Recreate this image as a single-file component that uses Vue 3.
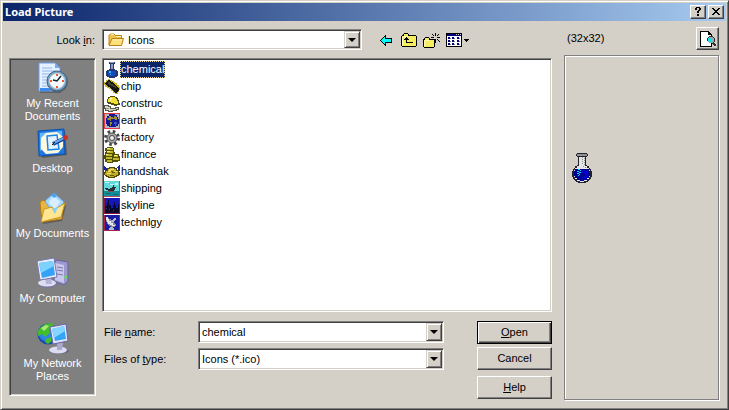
<template>
  <main class="dialog">
    <header class="titlebar">
      <h1>Load Picture</h1>
      <div class="titlebar_btns">
        <button type="button" class="caption" aria-label="Help">
          <svg width="8" height="9" viewBox="0 0 8 9" shape-rendering="crispEdges"><path d="M1 1h1V0h4v1h1v2H6v1H5v2H3V4h1V3h1V1H3v2H1zM3 7h2v2H3z" /></svg>
        </button>
        <button type="button" class="caption" aria-label="Close">
          <svg width="8" height="7" viewBox="0 0 8 7" shape-rendering="crispEdges"><path d="M0 0h2v1h1v1h2V1h1V0h2v1H7v1H6v1H5v1h1v1h1v1h1v1H6V6H5V5H3v1H2v1H0V6h1V5h1V4h1V3H2V2H1V1H0z" /></svg>
        </button>
      </div>
    </header>

    <form class="body" @submit.prevent>
      <div class="picker">
        <label class="look_label" for="look-in">Look <u>i</u>n:</label>
        <div class="look_row">
          <div class="combo look_combo">
            <svg class="look_icon" width="16" height="14" viewBox="0 0 16 14">
              <path d="M1 12V2.500L2.500 1H6l1.500 1.500H13.500V6" fill="#f0c44c" stroke="#b98212" />
              <path d="M1 12.500L4 5.500H15.500L13.500 12.500Z" fill="#ffdf7a" stroke="#b98212" />
              <path d="M5 7H14" stroke="#fff3b8" />
              <path d="M3 1.500H6M8 3.500H13" stroke="#fff0ae" />
            </svg>
            <select id="look-in" v-model="folder">
              <option>Icons</option>
            </select>
            <span class="drop"><i></i></span>
          </div>
          <div class="toolbar">
            <button type="button" aria-label="Back">
              <svg width="12" height="11" viewBox="0 0 12 11" shape-rendering="crispEdges">
                <path d="M5 0h1v3h6v5H6v3H5v-1H4V9H3V8H2V7H1V6H0V5h1V4h1V3h1V2h1V1h1z" />
                <path d="M5 2v2h6v3H5v2H4V8H3V7H2V6H1V5h1V4h1V3h1V2z" fill="#00ffff" />
              </svg>
            </button>
            <button type="button" aria-label="Up one level">
              <svg width="16" height="14" viewBox="0 0 16 14" shape-rendering="crispEdges">
                <path d="M1 2h1V1h1V0h4v1h1v1h7v1h1v10h-1v1H1v-1H0V3h1z" />
                <path d="M3 1h4v2h8v10H1V3h2z" fill="#f5ee5e" />
                <path d="M2 3h5v1H2zM1 4h1v8H1z" fill="#fffbc0" />
                <path d="M5 4h1v1h1v1h1v1H6v2h6v1H5V7H3V6h1V5h1z" />
              </svg>
            </button>
            <button type="button" aria-label="Create new folder">
              <svg width="17" height="15" viewBox="0 0 17 15" shape-rendering="crispEdges">
                <path d="M0 6h1V5h1V4h4v1h1v1h5v8h-1v1H1v-1H0z" />
                <path d="M2 5h4v2h5v7H1V7h1z" fill="#f5ee5e" />
                <path d="M2 7h4v1H2zM1 8h1v5H1z" fill="#fffbc0" />
                <path d="M12 0h1v3h-1zM12 6h1v4h-1zM8 4h3v1H8zM14 4h3v1h-3zM9 1h1v1H9zM10 2h1v1h-1zM15 1h1v1h-1zM14 2h1v1h-1zM14 6h1v1h-1zM15 7h1v1h-1zM16 8h1v1h-1z" />
              </svg>
            </button>
            <button type="button" class="views" aria-label="View menu">
              <svg width="24" height="14" viewBox="0 0 24 14" shape-rendering="crispEdges">
                <path d="M0 0h16v14H0z" />
                <path d="M1 3h14v10H1z" fill="#fff" />
                <path d="M1 1h14v2H1z" fill="#000080" />
                <path d="M10 1h1v1h-1zM12 1h1v1h-1zM14 1h1v1h-1z" fill="#d4d0c8" />
                <path d="M2 4h2v2H2zM6 4h2v2H6zM11 4h2v2h-2zM2 7h2v2H2zM6 7h2v2H6zM11 7h2v2h-2zM2 10h2v2H2zM6 10h2v2H6zM11 10h2v2h-2z" fill="#000080" />
                <path d="M4 5h1v1H4zM8 5h1v1H8zM13 5h1v1h-1zM4 8h1v1H4zM8 8h1v1H8zM13 8h1v1h-1zM4 11h1v1H4zM8 11h1v1H8zM13 11h1v1h-1z" fill="#808080" />
                <path d="M18 6h5v1h-1v1h-1v1h-1V8h-1V7h-1z" />
              </svg>
            </button>
          </div>
        </div>

        <nav class="places sunken" aria-label="Places">
          <button v-for="place in places" :key="place" type="button" class="place">
            <svg v-if="place === 'My Recent Documents'" width="32" height="32" viewBox="0 0 32 32">
              <path d="M3 3H20L24 7V31H3Z" fill="#333" opacity=".4" />
              <path d="M2 1H18L23 6V29H2Z" fill="#e4efff" stroke="#6f9fe8" />
              <path d="M18 1V6H23Z" fill="#78aaf2" />
              <path d="M5 6H15M5 9H19M5 12H14M5 15H11M5 18H10M5 21H10M5 24H11" stroke="#8fb7ef" />
              <path d="M3 26H12L14 29H3Z" fill="#3a8bee" />
              <circle cx="20.500" cy="20" r="10.500" fill="#55616f" />
              <circle cx="20" cy="19" r="10" fill="#7ea2bd" stroke="#3c6688" />
              <circle cx="20" cy="19" r="7.500" fill="#f3fbff" stroke="#c5d9e6" />
              <path d="M20 12V14M20 24V26M13 19H15M25 19H27" stroke="#ee5a2c" stroke-width="2" />
              <path d="M24 14L20 19L16 18" fill="none" stroke="#16232f" stroke-width="1.500" />
            </svg>
            <svg v-else-if="place === 'Desktop'" width="32" height="32" viewBox="0 0 32 32">
              <path d="M3 7L28 4L30 28L5 31Z" fill="#333" opacity=".5" />
              <path d="M1 4L27 2L28 27L2 29Z" fill="#1d78df" stroke="#0c50b0" />
              <path d="M3 6L25 4V10L3 24Z" fill="#62b6ff" />
              <path d="M9 6L20 5L26 10V20L21 26L9 27L4 22V11Z" fill="#fff8dc" />
              <path d="M10 9L20 8L22 22L11 23Z" fill="#e2f2ff" stroke="#1784e8" stroke-width="1.500" />
              <path d="M16 17L28 11" stroke="#183f8a" stroke-width="4" />
              <path d="M17 16L27 11" stroke="#62a9f2" stroke-width="2" />
              <path d="M15 18L18 15" stroke="#222" />
              <circle cx="28.500" cy="10.500" r="2.500" fill="#cf2f20" />
            </svg>
            <svg v-else-if="place === 'My Documents'" width="32" height="32" viewBox="0 0 32 32">
              <path d="M5 12L24 10L29 14L25 29L6 32Z" fill="#333" opacity=".45" />
              <path d="M3 11L5 8L11 10L12 13L25 8V27L5 30Z" fill="#e7b63f" stroke="#b57b14" />
              <path d="M8 9L17 1L27 10L18 24Z" fill="#a9d9ff" stroke="#64a6e4" />
              <path d="M14 7L17 4L23 10L18 17L12 11Z" fill="#d9efff" />
              <path d="M14 3L17 1L20 4L17 6Z" fill="#49a3eb" />
              <path d="M4 30L7 17L15 15L17 18L28 11L24 25Z" fill="#ffe68f" stroke="#cc951f" />
              <path d="M15 17L21 15L18 22Z" fill="#8ccdf9" />
            </svg>
            <svg v-else-if="place === 'My Computer'" width="32" height="32" viewBox="0 0 32 32">
              <path d="M17 6L20 3L31 5V24L27 28L17 24Z" fill="#9a98cc" stroke="#6664a0" />
              <path d="M18 6L27 8V26L18 23Z" fill="#c9c8ea" />
              <path d="M20 10L26 11M20 13L26 14M20 17L26 18" stroke="#7776aa" />
              <circle cx="29" cy="20" r="1.500" fill="#5ae642" />
              <ellipse cx="11" cy="27" rx="10" ry="4" fill="#77769b" />
              <ellipse cx="10" cy="26" rx="9" ry="3.500" fill="#dedef2" />
              <path d="M8 20L14 21L15 27H9Z" fill="#b4b3d9" />
              <path d="M0 4L17 1L20 20L3 23Z" fill="#ececfa" stroke="#7776b2" />
              <path d="M2 6L16 4L18 18L5 21Z" fill="#34a3f5" />
              <path d="M2 6L16 4L17 9L4 16Z" fill="#7ed2ff" />
            </svg>
            <svg v-else width="32" height="32" viewBox="0 0 32 32">
              <circle cx="11" cy="12" r="10.500" fill="#164da8" />
              <circle cx="10" cy="11" r="8.500" fill="#2e83e5" />
              <path d="M3 6L8 2L15 1L18 5L12 8L13 11L8 15L5 12L1 14V9ZM9 17L14 15L15 19L11 22L8 20Z" fill="#43bd2e" />
              <path d="M4 6L9 3L12 4L7 9Z" fill="#a7ee73" />
              <ellipse cx="22" cy="29" rx="10" ry="3" fill="#66658b" />
              <ellipse cx="21" cy="28" rx="9" ry="3.500" fill="#dddcf1" />
              <path d="M20 20L26 21L25 28H20Z" fill="#aaa9d0" />
              <path d="M13 5L29 2L31 19L16 22Z" fill="#e5e5fa" stroke="#6665a5" />
              <path d="M15 7L27 4L29 17L18 19Z" fill="#34a5f5" />
              <path d="M15 7L27 4L28 9L17 16Z" fill="#84d5ff" />
            </svg>
            <span>{{ place }}</span>
          </button>
        </nav>

        <ul class="files sunken" role="listbox" aria-label="Files">
          <li v-for="file in files" :key="file" role="option" :aria-selected="file === selected" @click="selected = file">
            <svg width="16" height="16" viewBox="0 0 16 16" shape-rendering="crispEdges">
              <g v-if="file === 'chemical'">
                <path d="M5 0h6v2h-1v5h1v1h2v1h1v5h-1v1h-2v1H5v-1H3v-1H2V9h1V8h2V7h1V2H5z" fill="#26366e" />
                <path d="M6 0h4v1H6zM7 2h2v5H7z" fill="#8f9cc0" />
                <path d="M4 9h8v4h-1v1H5v-1H4z" fill="#0e4bbf" />
                <path d="M5 9h2v2H5zM6 12h1v1H6z" fill="#43b4f4" />
              </g>
              <g v-else-if="file === 'chip'">
                <path d="M0 3h2V1h2V0h2v1h2v1h2v1h1v1h2v2h2v2h1v3h-1v2h-1v2h-3v-1H9v-2H7v-2H5v-1H3V8H1V6H0z" fill="#c5b51f" />
                <path d="M1 4h1V3h1V2h1V1h2v1h1v1h2v1h1v1h1v1h1v1h1v1h1v1h1v3h-1v1h-1v1h-2v-1h-1v-1h-1v-1H8v-1H7V9H6V8H4V7H3V6H2V5H1z" fill="#171711" />
                <path d="M4 3h2v1h1v1h2v1h1v1h2v2h-1V8H9V7H7V6H5V5H4z" fill="#45442e" />
              </g>
              <g v-else-if="file === 'construc'">
                <path d="M3 3h1V1h2V0h5v1h2v1h1v2h1v3h1v2h-3v1h-3V9H7V8H4V7H3z" fill="#4f4912" />
                <path d="M4 3h1V2h1V1h5v1h1v1h1v2h1v3h-4V7H7V6H4z" fill="#f1e137" />
                <path d="M6 2h2v1H7v2H6z" fill="#fffac0" />
                <path d="M0 9h5v1h2v2h4v-1h4v3h-2v1H9v1H4v-1H1v-2H0z" fill="#585850" />
                <path d="M1 10h3v1h2v2h6v-1h2v1h-2v1H9v1H5v-1H2v-2H1z" fill="#d7d6c8" />
                <path d="M2 12h3v1H2zM7 14h2v1H7z" fill="#a29e63" />
              </g>
              <g v-else-if="file === 'earth'">
                <path d="M0 0h16v16H0z" fill="#e43b46" />
                <path d="M1 1h14v14H1z" fill="#b6b4c8" />
                <path d="M5 1h6v1h2v2h1v2h1v5h-1v2h-2v1H5v-1H3v-2H2V5h1V3h2z" fill="#101a92" />
                <path d="M5 3h2v1h2v2H7v2H6V7H4V5h1zM10 3h2v1h1v3h-2V6H9V5h1zM6 9h2v2H7v2H6z" fill="#a08b33" />
                <path d="M3 5h1v2H3zM10 9h3v2h-1v2h-1v-2h-1z" fill="#4053cf" />
              </g>
              <g v-else-if="file === 'factory'" shape-rendering="auto">
                <circle cx="8" cy="8" r="6.500" fill="none" stroke="#444" stroke-width="3" stroke-dasharray="2.550 2.550" />
                <circle cx="8" cy="8" r="5" fill="#a9a9a9" stroke="#555" />
                <circle cx="8" cy="8" r="2.500" fill="#eee" stroke="#444" />
              </g>
              <g v-else-if="file === 'finance'">
                <path d="M1 1h2V0h6v1h1v4h1v2h4v2h1v5h-2v1H9v1H3v-1H1v-3H0V8h1V5h1V4H1z" fill="#514d0b" />
                <path d="M3 1h6v2H3zM3 4h6v2H3zM2 7h6v2H2zM2 10h6v2H2zM3 13h5v2H3zM10 8h4v2h-4zM9 11h6v2H9z" fill="#beb72a" />
                <path d="M3 1h3v1H3zM3 4h3v1H3zM2 7h2v1H2zM10 8h3v1h-3z" fill="#f4ed77" />
              </g>
              <g v-else-if="file === 'handshak'">
                <path d="M0 2h1v1h1v1h1v2H0zM15 1h1v6h-2V4h-1V3h1V2h1z" fill="#18279b" />
                <path d="M1 6h2V4h2V3h6v1h2v2h2v2h1v3h-1v1h-2v1h-2v1H4v-1H2v-1H1v-1H0V8h1z" fill="#4f4909" />
                <path d="M2 7h2V5h2V4h4v1h2v2h2v4h-2v1h-2v1H5v-1H3v-1H1V9h1z" fill="#c0ac25" />
                <path d="M5 5h5v1H7v2H4V7h1zM10 7h3v1h-3zM3 9h4v1H3z" fill="#f1df62" />
                <path d="M7 7h2v1h2v1H8V8H7zM6 11h4v1H6z" fill="#655b0a" />
              </g>
              <g v-else-if="file === 'shipping'">
                <path d="M0 0h16v16H0z" fill="#b64863" />
                <path d="M0 0h15v10H0z" fill="#63d8db" />
                <path d="M0 10h15v5H0z" fill="#0f9097" />
                <path d="M1 1h4v1H1zM6 3h4v1H6zM11 2h3v2h-3z" fill="#c2f4ef" />
                <path d="M1 7h3v1h2V7h2V6h1V4h1v2h2v1h-1v2h-1v1H4V9H2V8H1z" fill="#212e34" />
                <path d="M4 10h6v1H4z" fill="#8f4c54" />
                <path d="M2 12h5v1H2zM9 13h5v1H9z" fill="#0b6c78" />
              </g>
              <g v-else-if="file === 'skyline'">
                <path d="M0 0h16v16H0z" fill="#86143b" />
                <path d="M1 0h14v15H1z" fill="#1517bb" />
                <path d="M1 8h2V5h1V2h1v5h2v3h2V7h1V4h1v3h1v3h2V6h1v9H1z" fill="#09092e" />
                <path d="M2 10h1v1H2zM5 11h1v1H5zM9 12h1v1H9z" fill="#3536a0" />
              </g>
              <g v-else>
                <path d="M0 0h16v16H0z" fill="#a8204c" />
                <path d="M1 0h14v15H1z" fill="#181ca5" />
                <path d="M2 2h2v1h1v1h2v1h1v1h1v1h1v1h1v1h1v2h-1v1H7v-1H5v-1H4V9H3V7H2z" fill="#8b8d9f" />
                <path d="M2 2h2v2h1v2h2v2h2v2h2v1H8v-1H6V9H4V7H3V5H2z" fill="#e6e6ec" />
                <path d="M7 6h1V5h1V4h1V3h2v2h-1v1h-1v1H7zM6 12h3v1h1v2H5v-2h1z" fill="#b9bac8" />
              </g>
            </svg>
            <span class="file_name">{{ file }}</span>
          </li>
        </ul>

        <div class="bottom">
          <div class="fields">
            <label for="file-name">File <u>n</u>ame:</label>
            <div class="combo">
              <input id="file-name" v-model="selected" type="text">
              <button type="button" class="drop" aria-label="Recent names"><i></i></button>
            </div>
            <label for="file-type">Files of <u>t</u>ype:</label>
            <div class="combo">
              <select id="file-type" v-model="fileType">
                <option>Icons (*.ico)</option>
              </select>
              <span class="drop"><i></i></span>
            </div>
          </div>
          <div class="actions">
            <button type="submit" class="btn btn_default"><span><u>O</u>pen</span></button>
            <button type="button" class="btn"><span>Cancel</span></button>
            <button type="button" class="btn btn_help"><span><u>H</u>elp</span></button>
          </div>
        </div>
      </div>

      <aside class="preview">
        <div class="preview_head">
          <span>(32x32)</span>
          <button type="button" class="btn btn_preview" aria-label="Preview">
            <svg width="16" height="16" viewBox="0 0 16 16" shape-rendering="crispEdges">
              <path d="M0 0h9v1h1v1h1v1h1v13H0z" />
              <path d="M1 1h7v3h3v11H1z" fill="#fff" />
              <path d="M9 5h4v1h1v1h1v4h-1v1h1v1h1v2h-2v-1h-1v-1h-1v-1H9v-1H8v-1H7V7h1V6h1z" fill="#333" />
              <path d="M9 6h4v1h1v4h-1v1H9v-1H8V7h1z" fill="#8cacb0" />
              <path d="M8 7h2v1h1v3H9v-1H8z" fill="#00e8f0" />
            </svg>
          </button>
        </div>
        <div class="preview_box">
          <svg width="20" height="30" viewBox="0 0 20 30" shape-rendering="crispEdges">
            <path d="M5 0h10v1h1v2h-1v1h-1v8h1v1h2v2h1v1h1v2h1v6h-1v2h-1v1h-1v1h-1v1h-2v1h-2v1H8v-1H6v-1H4v-1H3v-1H2v-1H1v-2H0v-6h1v-2h1v-1h1v-2h2v-1h1V4H5V3H4V1h1z" fill="#222230" />
            <path d="M5 1h10v2H5z" fill="#929292" />
            <path d="M7 4h6v9h2v2h2v2h1v7h-1v2h-2v2h-3v1H8v-1H5v-2H3v-2H2v-7h1v-2h2v-2h2z" fill="#e4e4e4" />
            <path d="M10 4h1v1h-1zM12 5h1v1h-1zM10 6h1v1h-1zM12 7h1v1h-1zM10 8h1v1h-1zM12 9h1v1h-1zM10 10h1v1h-1zM12 11h1v1h-1zM11 13h1v1h-1zM13 14h1v1h-1z" fill="#909090" />
            <path d="M3 16h14v2h1v5h-1v2h-2v2h-3v1H8v-1H5v-2H3v-2H2v-5h1z" fill="#000094" />
            <path d="M10 18h6v5h-1v2h-2v1H9v-1h3v-2h1v-3h-3z" fill="#0000cf" />
            <path d="M6 16h2v1H6zM8 17h1v1H8zM5 18h2v1H5zM7 19h2v1H7zM5 20h2v1H5zM7 21h1v1H7zM6 22h1v1H6z" fill="#00e4ff" />
          </svg>
        </div>
      </aside>
    </form>
  </main>
</template>

<script setup>
import { ref } from 'vue';

const places = ['My Recent Documents', 'Desktop', 'My Documents', 'My Computer', 'My Network Places'];
const files = ['chemical', 'chip', 'construc', 'earth', 'factory', 'finance', 'handshak', 'shipping', 'skyline', 'technlgy'];

const folder = ref('Icons');
const selected = ref('chemical');
const fileType = ref('Icons (*.ico)');
</script>

<style>
body {
  margin: 0;
}
</style>

<style scoped>
.dialog,
.dialog * {
  box-sizing: border-box;
}
.dialog {
  display: flex;
  flex-direction: column;
  min-height: 100vh;
  padding: 2px;
  color: #000;
  background: #d4d0c8;
  border: 1px solid;
  border-color: #d4d0c8 #404040 #404040 #d4d0c8;
  box-shadow: inset 1px 1px #fff, inset -1px -1px #808080;
  font: 11px/13px "Liberation Sans", Arial, sans-serif;
}
button,
input,
select {
  margin: 0;
  padding: 0;
  color: inherit;
  font: inherit;
  border: 0;
  border-radius: 0;
  background: none;
}
svg {
  display: block;
  flex: none;
}

/* title bar */
.titlebar {
  display: flex;
  align-items: center;
  justify-content: space-between;
  height: 18px;
  padding: 0 2px;
  background: linear-gradient(to right, #0a246a, #a6caf0);
}
.titlebar h1 {
  margin: 0;
  color: #fff;
  font: bold 11px/18px "Noto Sans", Tahoma, sans-serif;
}
.titlebar_btns {
  display: flex;
  gap: 2px;
}
.caption {
  display: flex;
  align-items: center;
  justify-content: center;
  width: 16px;
  height: 14px;
  padding: 0 1px 1px 0;
}
.caption,
.btn {
  background: #d4d0c8;
  border: 1px solid;
  border-color: #fff #404040 #404040 #fff;
  box-shadow: inset -1px -1px #808080;
}

/* layout */
.body {
  display: flex;
  flex: 1;
  gap: 12px;
  padding: 6px;
}
.picker {
  display: grid;
  flex: 1;
  grid-template-columns: 87px minmax(0, 1fr);
  grid-template-rows: auto 1fr auto;
  column-gap: 6px;
  padding: 2px 0;
}
.look_label {
  padding: 5px 1px 0 0;
  text-align: right;
}
.look_row {
  display: flex;
  margin-bottom: 8px;
}
.sunken,
.combo {
  border: 1px solid;
  border-color: #808080 #fff #fff #808080;
  box-shadow: inset 1px 1px #404040, inset -1px -1px #d4d0c8;
}

/* combo boxes */
.combo {
  display: flex;
  flex: 1;
  align-items: stretch;
  height: 21px;
  padding: 1px;
  background-color: #fff;
  position: relative;
}
.combo select,
.combo input {
  flex: 1;
  min-width: 0;
  padding: 1px 18px 0 2px;
  appearance: none;
  outline: 0;
}
.look_combo select {
  padding-left: 4px;
}
.look_icon {
  align-self: center;
  margin-left: 4px;
}
.drop {
  display: flex;
  align-items: center;
  justify-content: center;
  position: absolute;
  top: 1px;
  right: 1px;
  bottom: 1px;
  width: 16px;
  background: #d4d0c8;
  border: 1px solid;
  border-color: #d4d0c8 #404040 #404040 #d4d0c8;
  box-shadow: inset 1px 1px #fff, inset -1px -1px #808080;
}
span.drop {
  pointer-events: none;
}
.drop i {
  border: 4px solid transparent;
  border-top-color: #000;
  border-bottom: 0;
}

.toolbar {
  display: flex;
  flex: 0 0 190px;
  padding: 1px 0 0 12px;
}
.toolbar button {
  display: flex;
  align-items: center;
  justify-content: center;
  width: 23px;
}
.toolbar .views {
  width: 30px;
}

/* places bar */
.places {
  display: flex;
  flex-direction: column;
  grid-row: 2 / 4;
  margin-bottom: 3px;
  padding: 3px 1px;
  background: #808080;
}
.place {
  display: flex;
  flex-direction: column;
  align-items: center;
  gap: 3px;
  height: 65px;
  color: #fff;
}
.place span {
  max-width: 76px;
}

/* file list */
.files {
  margin: 0 0 9px;
  padding: 2px 1px 1px;
  list-style: none;
  background: #fff;
}
.files li {
  display: flex;
  align-items: center;
  height: 17px;
}
.file_name {
  padding: 1px 0;
  line-height: 13px;
  border: 1px solid transparent;
}
.files li[aria-selected="true"] .file_name {
  color: #fff;
  background: #0a246a;
  border: 1px dotted #f5db95;
}

/* fields and buttons */
.bottom {
  display: flex;
  gap: 33px;
}
.fields {
  display: grid;
  flex: 1;
  grid-template-columns: 96px 1fr;
  grid-auto-rows: 22px;
  align-content: start;
  align-items: center;
  row-gap: 5px;
}
.fields label {
  padding: 1px 0 0 2px;
}
.fields .combo {
  height: 22px;
}
.actions {
  display: flex;
  flex-direction: column;
  gap: 3px;
  width: 75px;
}
.btn {
  height: 23px;
}
.btn_default {
  border-color: #000;
  box-shadow: inset 1px 1px #fff, inset -1px -1px #404040, inset -2px -2px #808080;
}
.btn_help {
  margin-top: 3px;
}

/* preview */
.preview {
  display: flex;
  flex-direction: column;
  gap: 5px;
  width: 156px;
}
.preview_head {
  display: flex;
  align-items: center;
  justify-content: space-between;
  padding: 0 1px 0 3px;
}
.btn_preview {
  display: flex;
  align-items: center;
  justify-content: center;
  width: 23px;
}
.preview_box {
  flex: 1;
  margin: 0 1px 1px 0;
  padding: 97px 7px 0;
  border: 1px solid #808080;
  box-shadow: inset 1px 1px #fff, 1px 1px #fff;
}
</style>
